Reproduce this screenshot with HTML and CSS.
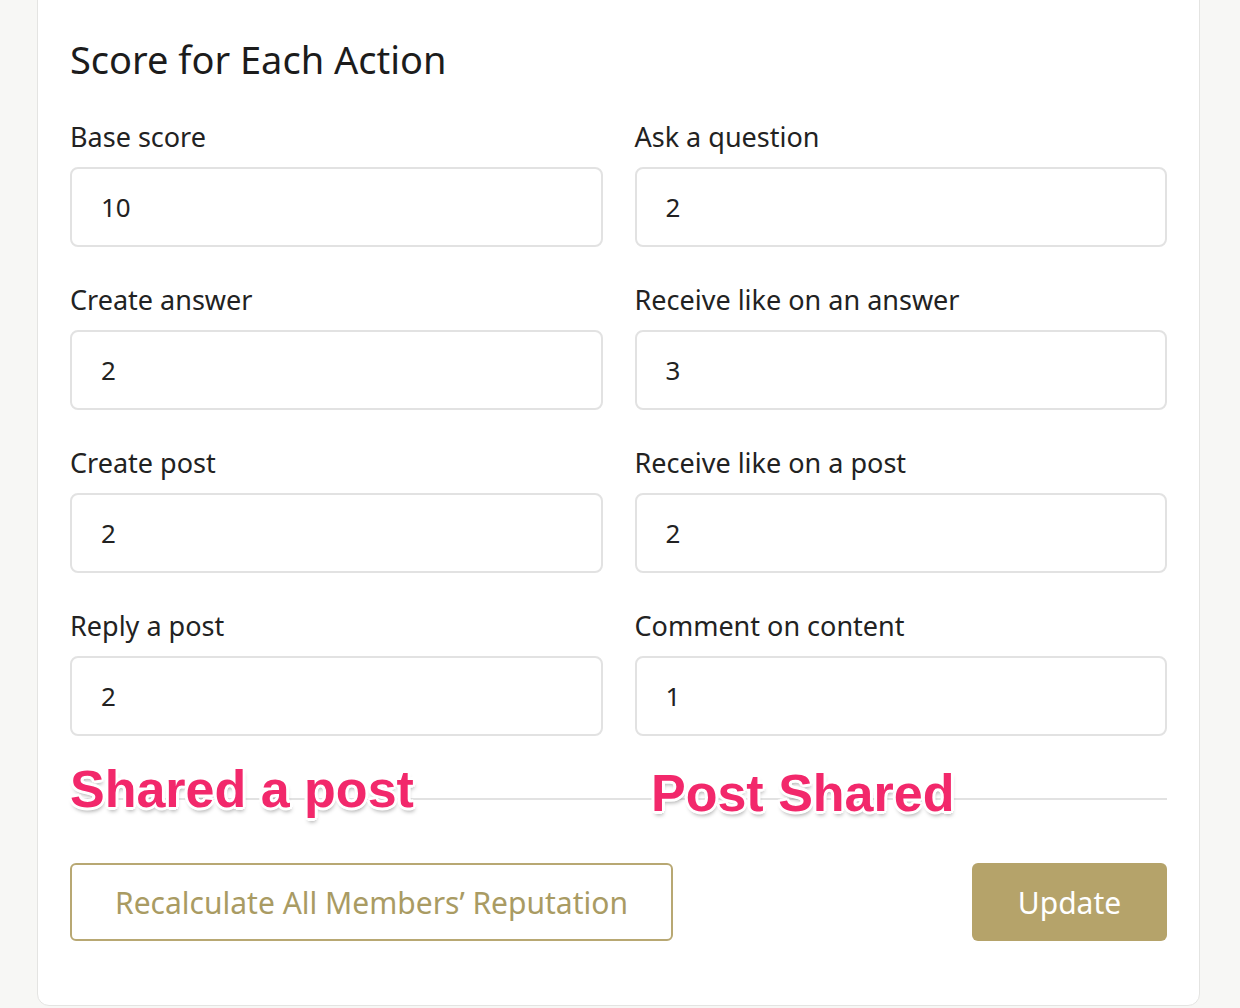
FILE: index.html
```html
<!DOCTYPE html>
<html>
<head>
<meta charset="utf-8">
<link rel="stylesheet" href="styles.css">
</head>
<body>
<div class="card">
  <h2 class="title">Score for Each Action</h2>
  <div class="grid">
    <div class="field"><label class="label">Base score</label><div class="input">10</div></div>
    <div class="field"><label class="label">Ask a question</label><div class="input">2</div></div>
    <div class="field"><label class="label">Create answer</label><div class="input">2</div></div>
    <div class="field"><label class="label">Receive like on an answer</label><div class="input">3</div></div>
    <div class="field"><label class="label">Create post</label><div class="input">2</div></div>
    <div class="field"><label class="label">Receive like on a post</label><div class="input">2</div></div>
    <div class="field"><label class="label">Reply a post</label><div class="input">2</div></div>
    <div class="field"><label class="label">Comment on content</label><div class="input">1</div></div>
  </div>
  <div class="divider-row">
    <div class="divider"></div>
    <span class="note note-left">Shared a post</span>
    <span class="note note-right">Post Shared</span>
  </div>
  <div class="actions">
    <button class="btn btn-outline">Recalculate All Members’ Reputation</button>
    <button class="btn btn-primary">Update</button>
  </div>
</div>
</body>
</html>
```

FILE: styles.css
```css
html, body {
  margin: 0;
  padding: 0;
}
body {
  background: #f7f7f5;
  font-family: "Noto Sans", "Open Sans", sans-serif;
  color: #1f1f1f;
  height: 1008px;
  overflow: hidden;
}
.card {
  box-sizing: border-box;
  width: 1163px;
  margin: -30px 0 0 37px;
  padding: 66px 32px 64px 32px;
  background: #fff;
  border: 1px solid #e4e4e2;
  border-radius: 12px;
}
.title {
  margin: 0 0 41px 0;
  font-size: 38px;
  line-height: 44px;
  font-weight: 400;
  color: #1c1c1c;
}
.grid {
  display: grid;
  grid-template-columns: 1fr 1fr;
  column-gap: 32px;
  row-gap: 38px;
}
.field {
  display: flex;
  flex-direction: column;
}
.label {
  font-size: 27px;
  line-height: 30px;
  margin-bottom: 15px;
  color: #222;
}
.input {
  box-sizing: border-box;
  height: 80px;
  border: 2px solid #e2e2e2;
  border-radius: 8px;
  padding: 0 29px;
  display: flex;
  align-items: center;
  font-size: 26px;
  color: #222;
}
.divider-row {
  position: relative;
  padding: 62px 0 63px;
}
.divider {
  height: 2px;
  background: #e2e2e2;
}
.note {
  position: absolute;
  top: 23px;
  font-family: "Liberation Sans", Arial, sans-serif;
  font-weight: 700;
  font-size: 52px;
  line-height: 60px;
  color: #f2286b;
  text-shadow:
    2px 0 0 #fff, -2px 0 0 #fff, 0 2px 0 #fff, 0 -2px 0 #fff,
    2px 2px 0 #fff, -2px -2px 0 #fff, 2px -2px 0 #fff, -2px 2px 0 #fff,
    3px 0 0 #fff, -3px 0 0 #fff, 0 3px 0 #fff, 0 -3px 0 #fff,
    1px 4px 4px rgba(0,0,0,0.35);
}
.note-left { left: 0; }
.note-right { left: 581px; top: 27px; }
.actions {
  display: flex;
  justify-content: space-between;
  align-items: center;
}
.btn {
  box-sizing: border-box;
  height: 78px;
  border-radius: 6px;
  font-family: "Noto Sans", "Open Sans", sans-serif;
  font-size: 30px;
  cursor: pointer;
}
.btn-outline {
  width: 603px;
  background: #fff;
  border: 2px solid #b8a873;
  color: #a99b63;
}
.btn-primary {
  width: 195px;
  background: #b5a36a;
  border: none;
  color: #fff;
}
```
